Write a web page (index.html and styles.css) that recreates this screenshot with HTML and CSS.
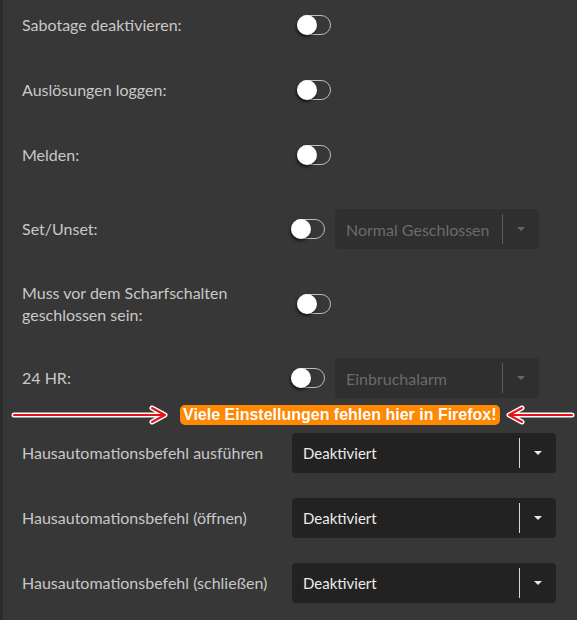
FILE: index.html
```html
<!DOCTYPE html>
<html lang="de">

<head>
    <meta charset="UTF-8">
    <meta name="viewport" content="width=device-width, initial-scale=1.0">
    <title>Sensor Einstellungen</title>
    <link rel="stylesheet" href="styles.css">
</head>

<body>
    <div class="page">
        <div class="settings">
            <div class="row">
                <label class="label">Sabotage deaktivieren:</label>
                <div class="control"><span class="switch single"></span></div>
            </div>
            <div class="row">
                <label class="label">Auslösungen loggen:</label>
                <div class="control"><span class="switch single"></span></div>
            </div>
            <div class="row">
                <label class="label">Melden:</label>
                <div class="control"><span class="switch single"></span></div>
            </div>
            <div class="row combo">
                <label class="label">Set/Unset:</label>
                <div class="control">
                    <span class="switch"></span>
                    <div class="select disabled">
                        <span class="value">Normal Geschlossen</span>
                        <span class="sep"></span>
                        <span class="caret"></span>
                    </div>
                </div>
            </div>
            <div class="row">
                <label class="label">Muss vor dem Scharfschalten<br>geschlossen sein:</label>
                <div class="control"><span class="switch single"></span></div>
            </div>
            <div class="row combo">
                <label class="label">24 HR:</label>
                <div class="control">
                    <span class="switch"></span>
                    <div class="select disabled">
                        <span class="value">Einbruchalarm</span>
                        <span class="sep"></span>
                        <span class="caret"></span>
                    </div>
                </div>
            </div>
            <div class="row">
                <label class="label">Hausautomationsbefehl ausführen</label>
                <div class="control">
                    <div class="select wide">
                        <span class="value">Deaktiviert</span>
                        <span class="sep"></span>
                        <span class="caret"></span>
                    </div>
                </div>
            </div>
            <div class="row">
                <label class="label">Hausautomationsbefehl (öffnen)</label>
                <div class="control">
                    <div class="select wide">
                        <span class="value">Deaktiviert</span>
                        <span class="sep"></span>
                        <span class="caret"></span>
                    </div>
                </div>
            </div>
            <div class="row">
                <label class="label">Hausautomationsbefehl (schließen)</label>
                <div class="control">
                    <div class="select wide">
                        <span class="value">Deaktiviert</span>
                        <span class="sep"></span>
                        <span class="caret"></span>
                    </div>
                </div>
            </div>
        </div>

        <!-- Hinweis-Overlay -->
        <div class="note">
            <svg class="arrow" width="170" height="30" viewBox="0 0 170 30">
                <g fill="none" stroke-linecap="round" stroke-linejoin="round">
                    <path d="M14 15 H164 M152 8 L165 15 L152 22" stroke="#fff" stroke-width="5"/>
                    <path d="M14 15 H164 M152 8 L165 15 L152 22" stroke="#e8101a" stroke-width="2"/>
                </g>
            </svg>
            <span class="note-text">Viele Einstellungen fehlen hier in Firefox!</span>
            <svg class="arrow" width="74" height="30" viewBox="0 0 74 30">
                <g fill="none" stroke-linecap="round" stroke-linejoin="round">
                    <path d="M8 15 H70 M20 8 L7 15 L20 22" stroke="#fff" stroke-width="5"/>
                    <path d="M8 15 H70 M20 8 L7 15 L20 22" stroke="#e8101a" stroke-width="2"/>
                </g>
            </svg>
        </div>
    </div>
</body>

</html>
```

FILE: styles.css
```css
* {
    margin: 0;
    padding: 0;
    box-sizing: border-box;
}

body {
    background: #373737;
    font-family: Lato, "Noto Sans", sans-serif;
    color: #c8c8c8;
    overflow: hidden;
}

.page {
    position: relative;
    display: flow-root;
    height: 620px;
    border-left: 3px solid #2b2b2b;
}

.settings {
    margin-top: -8px;
    padding-left: 19px;
}

.row {
    display: flex;
    align-items: center;
    height: 65px;
}

.row.combo {
    height: 84px;
}

.label {
    width: 269px;
    font-size: 16px;
    line-height: 22px;
}

.control {
    display: flex;
    align-items: center;
    gap: 10px;
}

/* Schalter */
.switch {
    position: relative;
    display: block;
    width: 34px;
    height: 20px;
    border: 1px solid #bdbdbd;
    border-radius: 10px;
}

.switch.single {
    margin-left: 6px;
}

.switch::after {
    content: "";
    position: absolute;
    left: -1px;
    top: -1px;
    width: 20px;
    height: 20px;
    border-radius: 50%;
    background: #fff;
    box-shadow: -1px 2px 3px rgba(0, 0, 0, 0.6);
}

/* Auswahlfelder */
.select {
    display: flex;
    align-items: center;
    width: 204px;
    height: 40px;
    padding-left: 11px;
    border-radius: 4px;
    background: #2f2f2f;
    font-size: 16px;
}

.select .value {
    flex: 1;
}

.select.disabled .value {
    color: #6b6b6b;
}

.select .sep {
    width: 1px;
    height: 30px;
    background: #5c5c5c;
}

.select .caret {
    width: 36px;
    height: 30px;
    position: relative;
}

.select .caret::after {
    content: "";
    position: absolute;
    left: 14px;
    top: 13px;
    border-left: 4px solid transparent;
    border-right: 4px solid transparent;
    border-top: 4px solid #666;
}

.select.wide {
    width: 264px;
    margin-left: 1px;
    background: #222;
}

.select.wide .value {
    color: #ececec;
    font-size: 15px;
}

.select.wide .sep {
    background: #d8d8d8;
}

.select.wide .caret::after {
    border-top-color: #e6e6e6;
}

/* Hinweis */
.note {
    position: absolute;
    left: -3px;
    top: 400px;
    display: flex;
    align-items: center;
    white-space: nowrap;
}

.note-text {
    margin: 0 2px 0 10px;
    padding: 1px 3px;
    border-radius: 5px;
    background: #ff8a00;
    color: #fff;
    font-family: "Liberation Sans", Arial, sans-serif;
    font-weight: bold;
    font-size: 16px;
    line-height: 18px;
    text-shadow: 0 0 2px #ff7a00;
}
```
